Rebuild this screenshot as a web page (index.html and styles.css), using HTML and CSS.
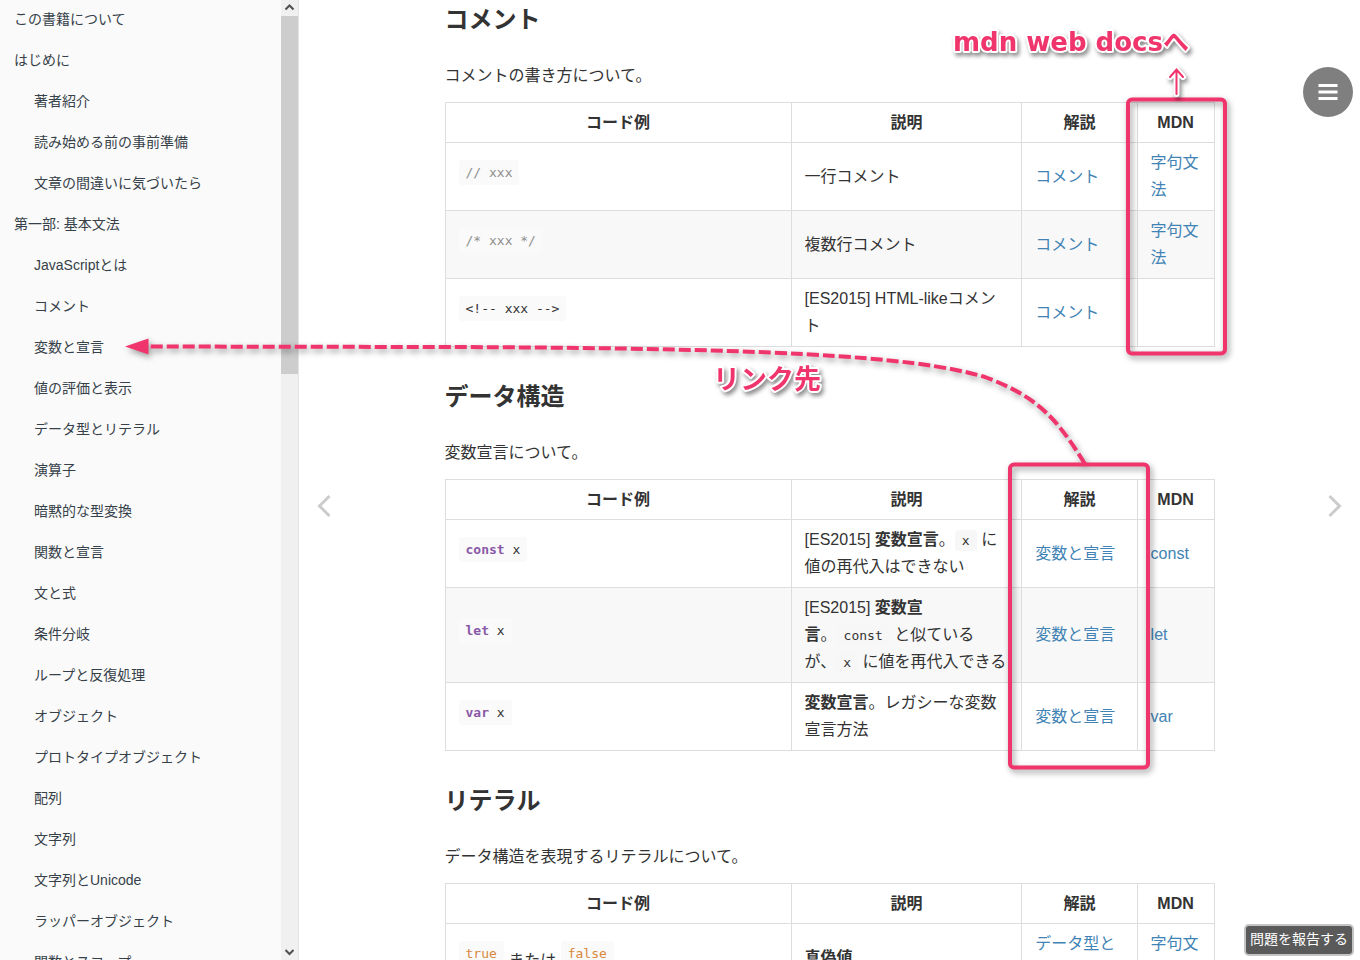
FILE: index.html
```html
<!DOCTYPE html>
<html lang="ja">
<head>
<meta charset="utf-8">
<title>JavaScriptチートシート</title>
<link rel="stylesheet" href="styles.css">
</head>
<body>
<div class="book">
  <aside class="sidebar">
    <nav class="toc" aria-label="目次">
      <ul class="toc-list">
        <li><a href="#">この書籍について</a></li>
        <li><a href="#">はじめに</a>
          <ul class="toc-sub">
            <li><a href="#">著者紹介</a></li>
            <li><a href="#">読み始める前の事前準備</a></li>
            <li><a href="#">文章の間違いに気づいたら</a></li>
          </ul>
        </li>
        <li><a href="#">第一部: 基本文法</a>
          <ul class="toc-sub">
            <li><a href="#">JavaScriptとは</a></li>
            <li><a href="#">コメント</a></li>
            <li><a href="#">変数と宣言</a></li>
            <li><a href="#">値の評価と表示</a></li>
            <li><a href="#">データ型とリテラル</a></li>
            <li><a href="#">演算子</a></li>
            <li><a href="#">暗黙的な型変換</a></li>
            <li><a href="#">関数と宣言</a></li>
            <li><a href="#">文と式</a></li>
            <li><a href="#">条件分岐</a></li>
            <li><a href="#">ループと反復処理</a></li>
            <li><a href="#">オブジェクト</a></li>
            <li><a href="#">プロトタイプオブジェクト</a></li>
            <li><a href="#">配列</a></li>
            <li><a href="#">文字列</a></li>
            <li><a href="#">文字列とUnicode</a></li>
            <li><a href="#">ラッパーオブジェクト</a></li>
            <li><a href="#">関数とスコープ</a></li>
          </ul>
        </li>
      </ul>
    </nav>
    <div class="scrollbar" aria-hidden="true">
      <svg class="scroll-arrow" viewBox="0 0 17 16"><path d="M4.5 9.5 8.5 5.5 12.5 9.5" /></svg>
      <div class="scroll-track"><div class="scroll-thumb"></div></div>
      <svg class="scroll-arrow" viewBox="0 0 17 16"><path d="M4.5 6 8.5 10 12.5 6" /></svg>
    </div>
  </aside>

  <div class="page">
    <a class="page-nav" href="#" aria-label="前のページ"><svg viewBox="0 0 14 24"><path d="M12.500 2 2.500 12 12.500 22" /></svg></a>
    <main class="content">
      <section>
        <h2>コメント</h2>
        <p>コメントの書き方について。</p>
        <table>
          <thead><tr><th class="col-code">コード例</th><th class="col-desc">説明</th><th class="col-guide">解説</th><th class="col-mdn">MDN</th></tr></thead>
          <tbody>
            <tr><td><code class="block comment">// xxx</code></td><td>一行コメント</td><td><a href="#">コメント</a></td><td><a href="#">字句文法</a></td></tr>
            <tr><td><code class="block comment">/* xxx */</code></td><td>複数行コメント</td><td><a href="#">コメント</a></td><td><a href="#">字句文法</a></td></tr>
            <tr><td><code class="block">&lt;!-- xxx --&gt;</code></td><td>[ES2015] HTML-likeコメント</td><td><a href="#">コメント</a></td><td></td></tr>
          </tbody>
        </table>
      </section>
      <section>
        <h2>データ構造</h2>
        <p>変数宣言について。</p>
        <table>
          <thead><tr><th class="col-code">コード例</th><th class="col-desc">説明</th><th class="col-guide">解説</th><th class="col-mdn">MDN</th></tr></thead>
          <tbody>
            <tr><td><code class="block"><span class="keyword">const</span> x</code></td><td>[ES2015] <strong>変数宣言</strong>。<code>x</code> に<br>値の再代入はできない</td><td><a href="#">変数と宣言</a></td><td><a href="#">const</a></td></tr>
            <tr><td><code class="block"><span class="keyword">let</span> x</code></td><td class="nowrap">[ES2015] <strong>変数宣<br>言</strong>。<code>const</code> と似ている<br>が、<code>x</code> に値を再代入できる</td><td><a href="#">変数と宣言</a></td><td><a href="#">let</a></td></tr>
            <tr><td><code class="block"><span class="keyword">var</span> x</code></td><td><strong>変数宣言</strong>。レガシーな変数宣言方法</td><td><a href="#">変数と宣言</a></td><td><a href="#">var</a></td></tr>
          </tbody>
        </table>
      </section>
      <section>
        <h2>リテラル</h2>
        <p>データ構造を表現するリテラルについて。</p>
        <table>
          <thead><tr><th class="col-code">コード例</th><th class="col-desc">説明</th><th class="col-guide">解説</th><th class="col-mdn">MDN</th></tr></thead>
          <tbody>
            <tr><td><code class="block literal">true</code> または <code class="block literal">false</code></td><td><strong>真偽値</strong></td><td><a href="#">データ型とリテラル</a></td><td><a href="#">字句文法</a></td></tr>
          </tbody>
        </table>
      </section>
    </main>
    <a class="page-nav" href="#" aria-label="次のページ"><svg viewBox="0 0 14 24"><path d="M1.500 2 11.500 12 1.500 22" /></svg></a>
  </div>
</div>

<button class="menu-button" type="button" aria-label="メニュー"><svg viewBox="0 0 20 16"><path d="M0.500 1.500H19.500M0.500 8H19.500M0.500 14.500H19.500" /></svg></button>
<button class="report-button" type="button">問題を報告する</button>

<svg class="annotations" viewBox="0 0 1360 960">
  <g class="marks">
    <rect x="1128" y="99.500" width="97" height="254" rx="4" />
    <rect x="1010" y="464.500" width="138" height="303" rx="4" />
    <path class="dashed" d="M1085 464C1055 415 1035 396 985 377C910 355 760 348 440 347L148 346.500" />
    <path class="head" d="M125 346.500 148.500 338.500V354.500Z" />
  </g>
  <g class="labels">
    <path class="halo" d="M1176.500 94V70M1170 77 1176.500 69.500 1183 77" />
    <path class="up" d="M1176.500 94V70M1170 77 1176.500 69.500 1183 77" />
    <text class="label-mdn" x="953" y="51">mdn web docsへ</text>
    <text class="label-link" x="713" y="389">リンク先</text>
  </g>
</svg>
</body>
</html>
```

FILE: styles.css
```css
* {
  box-sizing: border-box;
}

body {
  margin: 0;
  height: 100vh;
  overflow: hidden;
  background: #fff;
  color: #333;
  font-family: "Liberation Sans", "Noto Sans CJK JP", sans-serif;
  font-size: 16px;
  line-height: 27px;
}

a {
  color: #4183b4;
  text-decoration: none;
}

.book {
  display: flex;
  height: 100%;
}

/* Sidebar */
.sidebar {
  display: flex;
  flex: none;
  width: 299px;
  height: 100%;
  overflow: hidden;
  background: #fafafa;
  border-right: 1px solid #e4e4e4;
}

.toc {
  flex: 1;
  overflow: hidden;
}

.toc ul {
  margin: 0;
  padding: 0;
  list-style: none;
}

.toc .toc-sub {
  padding-left: 20px;
}

.toc a {
  display: block;
  padding: 9px 14px 11px;
  color: #364149;
  font-size: 14px;
  line-height: 21px;
}

.scrollbar {
  display: flex;
  flex-direction: column;
  width: 17px;
  background: #f0f0f0;
}

.scroll-arrow {
  width: 17px;
  height: 16px;
  fill: none;
  stroke: #505050;
  stroke-width: 2;
}

.scroll-track {
  flex: 1;
}

.scroll-thumb {
  height: 358px;
  background: #cdcdcd;
}

/* Page body */
.page {
  display: flex;
  flex: 1;
  justify-content: space-between;
  min-width: 0;
}

.page-nav {
  display: flex;
  flex: none;
  align-items: center;
  justify-content: center;
  width: 50px;
  padding-top: 52px;
}

.page-nav svg {
  width: 14px;
  height: 24px;
  fill: none;
  stroke: #ccc;
  stroke-width: 3;
}

.content {
  flex: 0 1 800px;
  min-width: 0;
  padding: 0 15px;
}

h2 {
  margin: 0 0 22px;
  font-size: 24px;
  line-height: 40px;
}

p {
  margin: 0 0 13px;
}

table {
  width: 100%;
  margin-bottom: 30px;
  border-collapse: collapse;
  table-layout: fixed;
}

th,
td {
  border: 1px solid #ddd;
}

th {
  padding: 6px 13px;
}

td {
  padding: 6px 13px 7px;
}

tbody tr:nth-child(even) {
  background: #f8f8f8;
}

.col-code { width: 45%; }
.col-desc { width: 30%; }
.col-guide { width: 15%; }
.col-mdn { width: 10%; }

.nowrap {
  white-space: nowrap;
}

code {
  padding: 3px 7px;
  border-radius: 3px;
  background: #f7f7f7;
  font-family: "DejaVu Sans Mono", monospace;
  font-size: 13px;
  line-height: 19px;
}

.block {
  display: inline-block;
  background: #fafafa;
  vertical-align: 8px;
}

.comment { color: #8e908c; }
.literal { color: #d9883b; }

.keyword {
  color: #8959a8;
  font-weight: bold;
}

/* Floating controls */
.menu-button {
  position: fixed;
  top: 67px;
  right: 7px;
  display: flex;
  align-items: center;
  justify-content: center;
  width: 50px;
  height: 50px;
  padding: 0;
  border: 0;
  border-radius: 50%;
  background: #7f7f7f;
}

.menu-button svg {
  width: 20px;
  height: 16px;
  stroke: #fff;
  stroke-width: 3;
}

.report-button {
  position: fixed;
  right: 6px;
  bottom: 4px;
  padding: 3px 4px 5px;
  border: 2px solid #c4c4c4;
  border-radius: 5px;
  background: #5a5a5a;
  color: #fff;
  font-family: "Liberation Sans", "Noto Sans CJK JP", sans-serif;
  font-size: 14px;
  line-height: 20px;
}

/* Callouts drawn over the page */
.annotations {
  position: absolute;
  top: 0;
  left: 0;
  width: 1360px;
  height: 960px;
  pointer-events: none;
}

.marks {
  fill: none;
  stroke: #f0346c;
  stroke-width: 4;
  filter: drop-shadow(2px 3px 3px rgba(0, 0, 0, 0.4));
}

.marks .dashed {
  stroke-dasharray: 12 4;
}

.marks .head {
  fill: #f0346c;
  stroke: none;
}

.labels {
  fill: #f0346c;
  filter: drop-shadow(2px 3px 2px rgba(0, 0, 0, 0.45));
}

.labels text {
  font-family: "DejaVu Sans", "Noto Sans CJK JP", sans-serif;
  font-weight: bold;
  paint-order: stroke;
  stroke: #fff;
  stroke-width: 4;
  stroke-linejoin: round;
}

.label-mdn { font-size: 26px; }
.label-link { font-size: 27px; }

.labels .halo,
.labels .up {
  fill: none;
  stroke-linecap: round;
  stroke: #fff;
  stroke-width: 6;
}

.labels .up {
  stroke: #f0346c;
  stroke-width: 2;
}
```
